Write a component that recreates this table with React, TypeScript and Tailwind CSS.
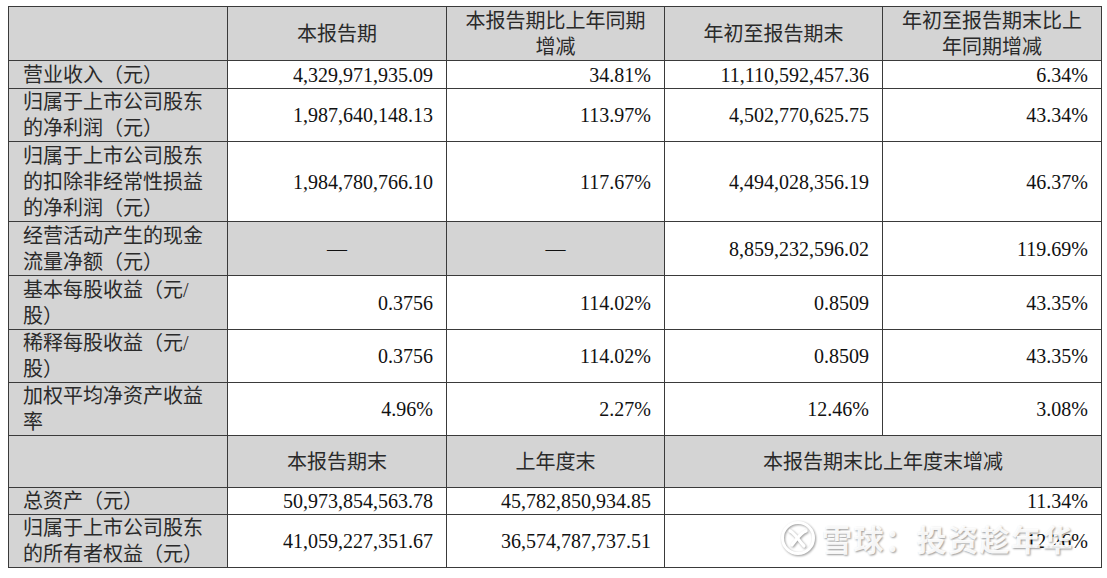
import React from "react";

const F = { fontFamily: '"Liberation Serif", "Noto Sans CJK SC", serif' };

type Row = {
  label: React.ReactNode;
  h: number;
  cells: string[];
};

const rows: Row[] = [
  { label: "营业收入（元）", h: 28, cells: ["4,329,971,935.09", "34.81%", "11,110,592,457.36", "6.34%"] },
  { label: <>归属于上市公司股东<br />的净利润（元）</>, h: 53, cells: ["1,987,640,148.13", "113.97%", "4,502,770,625.75", "43.34%"] },
  { label: <>归属于上市公司股东<br />的扣除非经常性损益<br />的净利润（元）</>, h: 80, cells: ["1,984,780,766.10", "117.67%", "4,494,028,356.19", "46.37%"] },
  { label: <>经营活动产生的现金<br />流量净额（元）</>, h: 54, cells: ["—", "—", "8,859,232,596.02", "119.69%"] },
  { label: <>基本每股收益（元/<br />股）</>, h: 54, cells: ["0.3756", "114.02%", "0.8509", "43.35%"] },
  { label: <>稀释每股收益（元/<br />股）</>, h: 53, cells: ["0.3756", "114.02%", "0.8509", "43.35%"] },
  { label: <>加权平均净资产收益<br />率</>, h: 53, cells: ["4.96%", "2.27%", "12.46%", "3.08%"] },
];

const bd = "border border-[#3a3a3a] py-0";
const labelCls = `${bd} bg-[#d4d4d4] pl-[14px] pr-1 text-left align-middle text-[#2a2a2a]`;
const numCls = `${bd} pr-[13px] pl-1 text-right align-middle text-[#111]`;
const headCls = `${bd} bg-[#d4d4d4] px-1 text-center align-middle text-[#2a2a2a]`;

export default function App() {
  return (
    <div className="w-[1107px] h-[578px] bg-white overflow-hidden" style={F}>
      <div className="relative pl-[8px] pt-[6px]">
        <table className="border-collapse table-fixed w-[1093px] text-[20px] leading-[26px]">
          <colgroup>
            <col className="w-[219px]" />
            <col className="w-[219px]" />
            <col className="w-[218px]" />
            <col className="w-[218px]" />
            <col className="w-[219px]" />
          </colgroup>
          <tbody>
            <tr className="h-[54px]">
              <td className={headCls}></td>
              <td className={headCls}>本报告期</td>
              <td className={headCls}>本报告期比上年同期<br />增减</td>
              <td className={headCls}>年初至报告期末</td>
              <td className={headCls}>年初至报告期末比上<br />年同期增减</td>
            </tr>
            {rows.map((r, i) => (
              <tr key={i} style={{ height: r.h }}>
                <td className={labelCls}>{r.label}</td>
                {r.cells.map((c, j) =>
                  c === "—" ? (
                    <td key={j} className={`${bd} bg-[#d4d4d4] text-center align-middle text-[#111]`}>—</td>
                  ) : (
                    <td key={j} className={numCls}>{c}</td>
                  )
                )}
              </tr>
            ))}
            <tr className="h-[52px]">
              <td className={headCls}></td>
              <td className={headCls}>本报告期末</td>
              <td className={headCls}>上年度末</td>
              <td className={headCls} colSpan={2}>本报告期末比上年度末增减</td>
            </tr>
            <tr className="h-[27px]">
              <td className={labelCls}>总资产（元）</td>
              <td className={numCls}>50,973,854,563.78</td>
              <td className={numCls}>45,782,850,934.85</td>
              <td className={numCls} colSpan={2}>11.34%</td>
            </tr>
            <tr className="h-[53px]">
              <td className={labelCls}>归属于上市公司股东<br />的所有者权益（元）</td>
              <td className={numCls}>41,059,227,351.67</td>
              <td className={numCls}>36,574,787,737.51</td>
              <td className={numCls} colSpan={2}>12.26%</td>
            </tr>
          </tbody>
        </table>
        <div className="absolute left-[780px] top-[520px] flex items-center gap-[6px] whitespace-nowrap pointer-events-none select-none">
          <svg width="36" height="36" viewBox="0 0 36 36" className="[filter:drop-shadow(1px_1px_1px_rgba(0,0,0,0.4))]">
            <circle cx="18" cy="18" r="15.5" fill="none" stroke="#ffffff" strokeWidth="3" />
            <path d="M10 11 C16 14 18 20 24 26" fill="none" stroke="#ffffff" strokeWidth="3.2" strokeLinecap="round" />
            <path d="M26 11 C20 13 17 19 12 25" fill="none" stroke="#ffffff" strokeWidth="3.2" strokeLinecap="round" />
          </svg>
          <span
            className="text-[30px] font-bold leading-none text-white/90 tracking-[1.5px] [text-shadow:1px_1px_2px_rgba(0,0,0,0.4)]"
            style={{ fontFamily: '"Noto Sans CJK SC", sans-serif' }}
          >
            雪球：投资趁年华
          </span>
        </div>
      </div>
    </div>
  );
}
